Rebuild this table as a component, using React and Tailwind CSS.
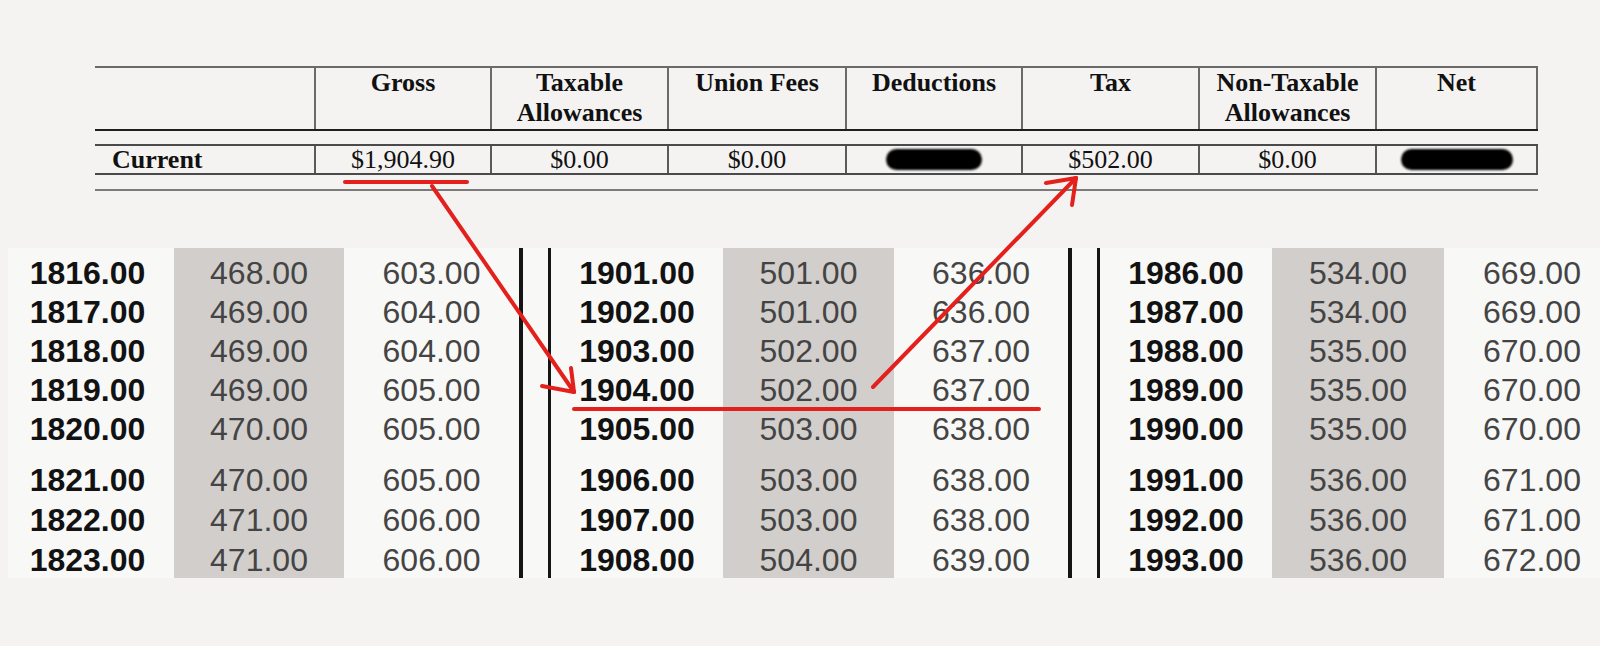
const headers = [
  { lines: [""], w: "w-[219px]" },
  { lines: ["Gross"], w: "w-[176px]" },
  { lines: ["Taxable", "Allowances"], w: "w-[177px]" },
  { lines: ["Union Fees"], w: "w-[178px]" },
  { lines: ["Deductions"], w: "w-[176px]" },
  { lines: ["Tax"], w: "w-[177px]" },
  { lines: ["Non-Taxable", "Allowances"], w: "w-[177px]" },
  { lines: ["Net"], w: "w-[163px]" },
];

const current = ["$1,904.90", "$0.00", "$0.00", null, "$502.00", "$0.00", null];

const groups = [
  {
    bold: ["1816.00", "1817.00", "1818.00", "1819.00", "1820.00", "1821.00", "1822.00", "1823.00"],
    mid: ["468.00", "469.00", "469.00", "469.00", "470.00", "470.00", "471.00", "471.00"],
    right: ["603.00", "604.00", "604.00", "605.00", "605.00", "605.00", "606.00", "606.00"],
    widths: ["w-[166px] pr-[7px]", "w-[170px]", "w-[175px]"],
  },
  {
    bold: ["1901.00", "1902.00", "1903.00", "1904.00", "1905.00", "1906.00", "1907.00", "1908.00"],
    mid: ["501.00", "501.00", "502.00", "502.00", "503.00", "503.00", "503.00", "504.00"],
    right: ["636.00", "636.00", "637.00", "637.00", "638.00", "638.00", "638.00", "639.00"],
    widths: ["w-[172px]", "w-[171px]", "w-[174px]"],
  },
  {
    bold: ["1986.00", "1987.00", "1988.00", "1989.00", "1990.00", "1991.00", "1992.00", "1993.00"],
    mid: ["534.00", "534.00", "535.00", "535.00", "535.00", "536.00", "536.00", "536.00"],
    right: ["669.00", "669.00", "670.00", "670.00", "670.00", "671.00", "671.00", "672.00"],
    widths: ["w-[172px]", "w-[172px]", "w-[150px] pl-[26px]"],
  },
];

const NumColumn = ({ values, className }) => (
  <div className={`pt-[6px] text-center ${className}`}>
    {values.slice(0, 5).map((v, i) => (
      <div key={i}>{v}</div>
    ))}
    <div className="mt-[11px] leading-[40px]">
      {values.slice(5).map((v, i) => (
        <div key={i}>{v}</div>
      ))}
    </div>
  </div>
);

const Separator = () => (
  <div className="flex h-full">
    <div className="w-[4px] bg-[#151515]" />
    <div className="w-[25px]" />
    <div className="w-[3px] bg-[#151515]" />
  </div>
);

const Blob = ({ w }) => (
  <div className={`${w} h-[21px] rounded-full bg-black blur-[1px]`} />
);

export default function App() {
  return (
    <div className="relative w-[1600px] h-[646px] overflow-hidden bg-[#f4f3f1]">
      {/* pay summary table */}
      <div className="pt-[66px] pl-[95px] font-['Liberation_Serif',serif] text-[26px] text-[#111]">
        <div className="w-[1443px]">
          <div className="flex border-t-2 border-b-2 border-t-[#6a6a6a] border-b-[#1e1e1e]">
            {headers.map((h, i) => (
              <div
                key={i}
                className={`${h.w} h-[61px] text-center font-bold leading-[30px] ${
                  i > 0 ? "border-l-2 border-[#6a6a6a]" : ""
                } ${i === headers.length - 1 ? "border-r-2" : ""}`}
              >
                {h.lines.map((l, j) => (
                  <div key={j}>{l}</div>
                ))}
              </div>
            ))}
          </div>

          <div className="mt-[13px] flex border-t-2 border-b-2 border-[#4a4a4a]">
            <div className="w-[219px] h-[27px] pl-[17px] font-bold leading-[27px]">Current</div>
            {current.map((c, i) => (
              <div
                key={i}
                className={`${headers[i + 1].w} h-[27px] flex items-center justify-center border-l-2 border-[#5a5a5a] leading-[27px] ${
                  i === current.length - 1 ? "border-r-2" : ""
                }`}
              >
                {c ?? <Blob w={i === 3 ? "w-[96px]" : "w-[112px]"} />}
              </div>
            ))}
          </div>

          <div className="mt-[14px] border-t-2 border-[#7a7a7a]" />
        </div>
      </div>

      {/* tax lookup table */}
      <div className="mt-[57px] ml-[8px] flex h-[330px] w-[1592px] bg-[#f8f8f7] font-['Liberation_Sans',sans-serif] text-[32px] leading-[39px]">
        {groups.map((g, gi) => (
          <div key={gi} className="flex h-full">
            <NumColumn values={g.bold} className={`${g.widths[0]} font-bold text-[#121212]`} />
            <NumColumn values={g.mid} className={`${g.widths[1]} bg-[#d1cecc] text-[#444]`} />
            <NumColumn values={g.right} className={`${g.widths[2]} text-[#444]`} />
            {gi < groups.length - 1 && <Separator />}
          </div>
        ))}
      </div>

      {/* red annotations */}
      <svg
        className="pointer-events-none absolute inset-0"
        width="1600"
        height="646"
        viewBox="0 0 1600 646"
        fill="none"
        stroke="#e3201c"
        strokeWidth="4"
        strokeLinecap="round"
      >
        <line x1="345" y1="182" x2="467" y2="182" />
        <line x1="432" y1="186" x2="574" y2="392" />
        <line x1="542" y1="386" x2="574" y2="392" />
        <line x1="571" y1="368" x2="574" y2="392" />
        <line x1="574" y1="409" x2="1039" y2="409" />
        <line x1="873" y1="387" x2="1076" y2="178" />
        <line x1="1046" y1="183" x2="1076" y2="178" />
        <line x1="1072" y1="205" x2="1076" y2="178" />
      </svg>
    </div>
  );
}
